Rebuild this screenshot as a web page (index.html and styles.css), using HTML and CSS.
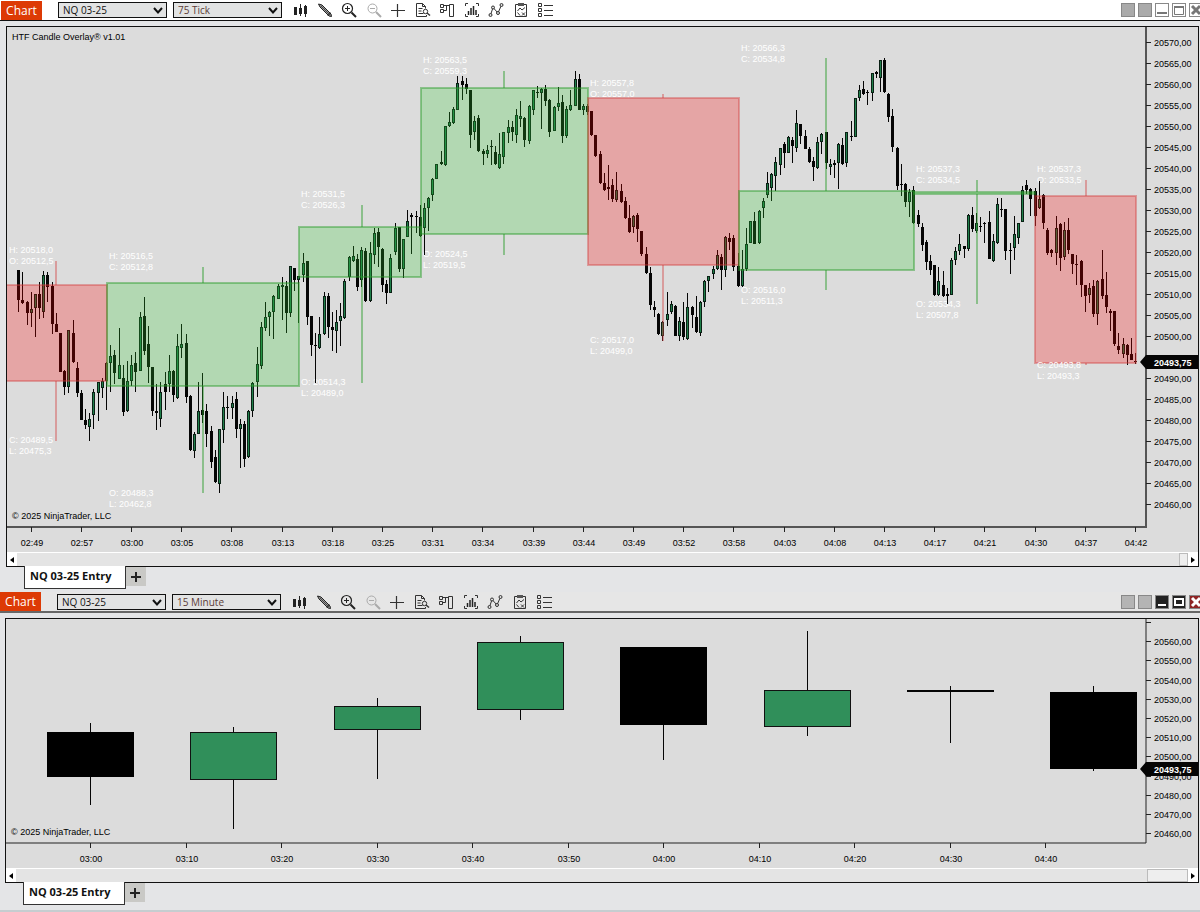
FILE: index.html
```html
<!DOCTYPE html>
<html lang="en">

<head>
    <meta charset="UTF-8">
    <title>NQ 03-25 Chart</title>
    <link rel="stylesheet" href="styles.css">
</head>

<body>
    <!-- icon set shared by both toolbars -->
    <svg class="icon-defs" aria-hidden="true">
        <symbol id="i-bars" viewBox="0 0 16 16">
            <path d="M8.500 2v12M13.500 3v12" stroke="#222" fill="none" />
            <path d="M2 5h3v8h-3zM7 6h3v6h-3zM12 4h3v8h-3z" fill="#222" />
        </symbol>
        <symbol id="i-pencil" viewBox="0 0 16 16">
            <path d="M1.500 2l3.500 1 9 9 .5 2.500-2.500-.5-9-9z" fill="#999" stroke="#222" />
            <path d="M4 4l9 9M13.500 10.500l-3 3" stroke="#333" fill="none" stroke-width=".8" />
        </symbol>
        <symbol id="i-zoomin" viewBox="0 0 16 16">
            <circle cx="6.500" cy="6.500" r="5" fill="none" stroke="#222" stroke-width="1.200" />
            <path d="M4 6.500h5M6.500 4v5" stroke="#222" fill="none" />
            <path d="M10.500 10.500l4.500 4.500" stroke="#222" stroke-width="2" />
        </symbol>
        <symbol id="i-zoomout" viewBox="0 0 16 16">
            <circle cx="6.500" cy="6.500" r="4.500" fill="none" stroke="#aaa" />
            <path d="M4 6.500h5" stroke="#aaa" fill="none" />
            <path d="M10 10l5 5" stroke="#aaa" stroke-width="2" />
        </symbol>
        <symbol id="i-cross" viewBox="0 0 16 16">
            <path d="M1 8.500h14M7.500 2v13" stroke="#333" fill="none" stroke-width="1.200" />
        </symbol>
        <symbol id="i-doc" viewBox="0 0 16 16">
            <path d="M11.500 13v1.500H1.500v-13h6l3 3v2M7.500 1.500v3h3M3.500 6.500h4M3.500 9h3M3.500 11.500h5" stroke="#333" fill="none" />
            <circle cx="10.500" cy="9.500" r="2.200" fill="none" stroke="#333" />
            <path d="M12 11l3 2.500" stroke="#333" stroke-width="1.500" />
        </symbol>
        <symbol id="i-trader" viewBox="0 0 16 16">
            <path d="M1.500 2.500h3v3h-3zM1.500 7.500h3v3h-3zM4.500 3.500h6M4.500 8.500h3v-5M10.500 2.500h4v12h-4z" stroke="#333" fill="none" />
        </symbol>
        <symbol id="i-indicator" viewBox="0 0 16 16">
            <path d="M4 1.500H1.500V4M12 1.500h2.500V4M4 14.500H1.500V12M12 14.500h2.500V12" stroke="#333" fill="none" />
            <path d="M4.500 9v4M7 6v7M9.500 4v9M12 8v5" stroke="#222" stroke-width="1.500" fill="none" />
        </symbol>
        <symbol id="i-strategy" viewBox="0 0 16 16">
            <path d="M2.500 13L5 5.500l5 5.500 3.500-8" stroke="#333" fill="none" />
            <g fill="#ddd" stroke="#333">
                <circle cx="2.500" cy="13" r="1.500" />
                <circle cx="5" cy="5.500" r="1.500" />
                <circle cx="10" cy="11" r="1.500" />
                <circle cx="13.500" cy="3" r="1.500" />
            </g>
        </symbol>
        <symbol id="i-props" viewBox="0 0 16 16">
            <path d="M2.500 2.500h11v12h-11z" stroke="#333" fill="none" />
            <path d="M5 1h6v3H5z" fill="#555" />
            <path d="M4.500 9l2.500-3 2 2 3-2.500M4.500 10.500l2.500 3M9 10.500l3 3m0-3l-3 3" stroke="#333" fill="none" />
        </symbol>
        <symbol id="i-list" viewBox="0 0 16 16">
            <path d="M1.500 1.500h3v3h-3zM1.500 6.500h3v3h-3zM1.500 11.500h3v3h-3zM7 3.500h9M7 8.500h9M7 13.500h9" stroke="#333" fill="none" />
        </symbol>
    </svg>

    <section class="chart-window active">
        <header class="toolbar">
            <h2 class="badge">Chart</h2>
            <div class="picker">
                <select aria-label="Instrument"><option>NQ 03-25</option></select>
                <svg class="chevron" viewBox="0 0 10 8"><path d="M1 1l4 4.500L9 1" /></svg>
            </div>
            <div class="picker interval">
                <select aria-label="Interval"><option>75 Tick</option></select>
                <svg class="chevron" viewBox="0 0 10 8"><path d="M1 1l4 4.500L9 1" /></svg>
            </div>
            <nav class="tools"></nav>
            <div class="window-buttons">
                <button class="link" aria-label="Instrument link"></button>
                <button class="link" aria-label="Interval link"></button>
                <button aria-label="Minimize"><svg viewBox="0 0 12 12"><path d="M1 9h10" stroke-width="2" /></svg></button>
                <button aria-label="Maximize"><svg viewBox="0 0 12 12"><path d="M2 3h8" stroke-width="2" /><path d="M1.500 2v8.500h9V2" /></svg></button>
                <button class="close" aria-label="Close"><svg viewBox="0 0 12 12"><path d="M2 2l8 8M10 2l-8 8" stroke-width="3" /></svg></button>
            </div>
        </header>
        <div class="panel">
            <svg id="tickChart" class="plot" viewBox="7 27 1191 525"></svg>
            <div class="scrollbar">
                <button aria-label="Scroll left"><svg viewBox="0 0 6 8"><path d="M5 1v6L1 4z" /></svg></button>
                <div class="track"><div class="thumb"></div></div>
                <button aria-label="Scroll right"><svg viewBox="0 0 6 8"><path d="M1 1v6l4-3z" /></svg></button>
            </div>
        </div>
        <div class="tabs">
            <button class="tab">NQ 03-25 Entry</button>
            <button class="add-tab" aria-label="New tab"><svg viewBox="0 0 10 10"><path d="M5 0v10M0 5h10" /></svg></button>
        </div>
    </section>

    <section class="chart-window second">
        <header class="toolbar">
            <h2 class="badge">Chart</h2>
            <div class="picker">
                <select aria-label="Instrument"><option>NQ 03-25</option></select>
                <svg class="chevron" viewBox="0 0 10 8"><path d="M1 1l4 4.500L9 1" /></svg>
            </div>
            <div class="picker interval">
                <select aria-label="Interval"><option>15 Minute</option></select>
                <svg class="chevron" viewBox="0 0 10 8"><path d="M1 1l4 4.500L9 1" /></svg>
            </div>
            <nav class="tools"></nav>
            <div class="window-buttons">
                <button class="link" aria-label="Instrument link"></button>
                <button class="link" aria-label="Interval link"></button>
                <button aria-label="Minimize"><svg viewBox="0 0 12 12"><path d="M2 9h8" stroke-width="2" /></svg></button>
                <button aria-label="Maximize"><svg viewBox="0 0 12 12"><path d="M2 3h8v6H2z" stroke-width="2" /></svg></button>
                <button class="close" aria-label="Close"><svg viewBox="0 0 12 12"><path d="M2 2l8 8M10 2l-8 8" stroke-width="3" /></svg></button>
            </div>
        </header>
        <div class="panel">
            <svg id="minuteChart" class="plot" viewBox="6 619 1192 249"></svg>
            <div class="scrollbar">
                <button aria-label="Scroll left"><svg viewBox="0 0 6 8"><path d="M5 1v6L1 4z" /></svg></button>
                <div class="track"><div class="thumb"></div></div>
                <button aria-label="Scroll right"><svg viewBox="0 0 6 8"><path d="M1 1v6l4-3z" /></svg></button>
            </div>
        </div>
        <div class="tabs">
            <button class="tab">NQ 03-25 Entry</button>
            <button class="add-tab" aria-label="New tab"><svg viewBox="0 0 10 10"><path d="M5 0v10M0 5h10" /></svg></button>
        </div>
    </section>

    <script src="charts.js"></script>
</body>

</html>
```
FILE: styles.css
```css
* {
    box-sizing: border-box;
}

body {
    margin: 0;
    background-color: #e4e5e7;
    font-family: "Open Sans", "Noto Sans", sans-serif;
    color: #111;
    overflow-x: hidden;
}

button {
    padding: 0;
    border: none;
    background: none;
    font: inherit;
    color: inherit;
}

.icon-defs {
    display: none;
}

.chart-window {
    display: flex;
    flex-direction: column;
}

/* toolbar */
.toolbar {
    display: flex;
    align-items: center;
    height: 21px;
    padding-left: 1px;
    border-bottom: 1px solid #111;
    background-color: #fff;
    overflow: hidden;
}

.second .toolbar {
    padding-left: 0;
    border-bottom: 2px solid #666;
    background-color: #e6e6e6;
}

.badge {
    width: 41px;
    margin: 0 16px 0 0;
    background-color: #dd3a05;
    color: #fff;
    font-size: 12px;
    font-weight: 400;
    line-height: 19px;
    text-align: center;
}

.picker {
    position: relative;
    width: 109px;
    margin-right: 6px;
}

.picker select {
    display: block;
    width: 100%;
    height: 16px;
    padding: 0 4px;
    border: 1px solid #111;
    border-radius: 0;
    appearance: none;
    background-color: #e2e3e3;
    color: #111;
    font-family: inherit;
    font-size: 10px;
    line-height: 14px;
}

.interval select {
    color: #5c3c38;
}

.chevron {
    position: absolute;
    top: 5px;
    right: 4px;
    width: 10px;
    height: 8px;
    fill: none;
    stroke: #111;
    stroke-width: 2;
    pointer-events: none;
}

.tools {
    display: flex;
    justify-content: space-between;
    width: 261px;
    margin-left: 4px;
}

.tools button,
.tools svg {
    display: block;
    width: 16px;
    height: 16px;
}

.window-buttons {
    display: flex;
    gap: 3px;
    margin-left: auto;
    margin-right: -3px;
}

.window-buttons button {
    width: 14px;
    height: 14px;
    border: 1px solid #888;
    background-color: #fff;
}

.window-buttons .link {
    background-color: #aaa;
}

.window-buttons svg {
    display: block;
    width: 12px;
    height: 12px;
    fill: none;
    stroke: #777;
}

.second .window-buttons button {
    background-color: #222;
}

.second .window-buttons .link {
    background-color: #b4b4b4;
}

.second .window-buttons .close {
    background-color: #8e2424;
}

.second .window-buttons svg {
    stroke: #fff;
}

/* chart */
.panel {
    margin: 5px 1px 0 6px;
    border: 1px solid #111;
    background-color: #dcdcdc;
}

.second .panel {
    margin-left: 5px;
}

.plot {
    display: block;
    width: 100%;
    height: auto;
    font-family: "Liberation Sans", Arial, sans-serif;
    font-size: 9px;
}

.plot text {
    fill: #000;
}

.plot .htf-label,
.plot .price-text {
    fill: #fff;
}

.plot .price-text {
    font-weight: 700;
}

.wick,
.body-down,
.price-tag {
    fill: #050505;
}

.body-up {
    fill: #0a2014;
}

.body-core {
    fill: #1f7f4a;
}

.htf-up {
    fill: rgba(50, 205, 50, .25);
}

.htf-down {
    fill: rgba(255, 0, 0, .25);
}

.htf-up-line {
    fill: none;
    stroke: rgba(40, 155, 40, .45);
    stroke-width: 2;
}

.htf-down-line {
    fill: none;
    stroke: rgba(210, 60, 60, .4);
    stroke-width: 2;
}

.axis {
    fill: none;
    stroke: #555;
    stroke-width: 2;
}

.second .axis,
.tick {
    fill: none;
    stroke: #222;
    stroke-width: 1;
}

.big-up {
    fill: #308f5a;
    stroke: #111;
}

.big-down {
    fill: #000;
    stroke: #000;
}

/* scrollbar */
.scrollbar {
    display: flex;
    height: 14px;
    border-top: 1px solid #fff;
    background-color: #e4e4e4;
}

.scrollbar button {
    width: 10px;
    background-color: #fff;
}

.scrollbar button svg {
    display: block;
    width: 6px;
    height: 8px;
    margin: auto;
}

.track {
    display: flex;
    flex: 1;
    justify-content: flex-end;
}

.thumb {
    width: 9px;
    border: 1px solid #bbb;
    background-color: #eee;
}

.second .thumb {
    width: 41px;
}

/* tabs */
.tabs {
    display: flex;
    align-items: flex-start;
    height: 26px;
    margin-top: -1px;
    padding-left: 24px;
}

.second .tabs {
    height: 30px;
    padding-left: 23px;
    border-bottom: 2px solid #c6cdd0;
}

.tab {
    width: 102px;
    height: 23px;
    padding: 0 0 4px 5px;
    border: 1px solid #333;
    border-top: none;
    background-color: #fff;
    font-size: 11px;
    font-weight: 700;
    text-align: left;
    white-space: nowrap;
}

.add-tab {
    width: 20px;
    height: 19px;
    margin-top: 1px;
    background-color: #c9c9c6;
}

.add-tab svg {
    display: block;
    width: 10px;
    height: 10px;
    margin: auto;
    stroke: #222;
    stroke-width: 2;
}
```
FILE: charts.js
```js
const SVG_NS = 'http://www.w3.org/2000/svg';

// toolbar buttons
const tools = [
    ['bars', 'Bars style'], ['pencil', 'Drawing tools'], ['zoomin', 'Zoom in'], ['zoomout', 'Zoom out'],
    ['cross', 'Crosshair'], ['doc', 'Data box'], ['trader', 'Chart trader'], ['indicator', 'Indicators'],
    ['strategy', 'Strategies'], ['props', 'Properties'], ['list', 'Data series']
];
document.querySelectorAll('.tools').forEach(nav => {
    nav.innerHTML = tools.map(([id, name]) =>
        `<button aria-label="${name}"><svg><use href="#i-${id}"></use></svg></button>`).join('');
});

// high, body top, body bottom, low (plot units), u = up, d = down
const tickCandles = `
270,270,300,312,d 272,300,303,304,d 301,302,313,325,d 292,309,313,327,u 294,294,308,337,u 282,294,308,319,d
271,275,312,318,u 272,275,287,302,d 282,286,324,334,d 313,324,332,332,d 333,333,372,372,d 370,371,387,395,d
330,330,387,393,u 320,333,362,363,d 362,368,393,397,d 390,393,420,420,d 409,420,425,429,d 413,419,427,441,u
389,392,415,429,u 382,382,393,421,u 378,381,388,398,u 362,363,381,410,u 345,356,363,392,u 350,355,373,384,d
328,365,379,379,u 365,378,412,416,d 361,381,411,412,u 355,365,381,386,u 352,363,372,392,d 312,317,371,371,u
297,316,351,355,d 326,344,367,383,d 367,367,411,416,d 384,411,413,430,d 382,392,419,427,u 372,384,392,410,d
355,371,384,392,u 370,371,395,402,d 334,346,398,399,u 324,344,348,358,u 334,343,397,403,d 395,396,450,451,d
432,434,451,458,u 382,411,434,434,u 373,410,415,423,d 404,411,434,447,d 426,431,462,468,d 450,457,482,483,d
429,429,484,493,u 392,407,430,443,u 396,407,408,419,d 396,403,408,419,u 392,399,429,438,d 419,424,429,468,u
421,424,459,467,d 410,411,457,458,u 382,383,411,417,u 347,364,382,397,u 322,327,366,369,u 302,317,328,331,u
311,312,317,336,u 295,296,312,339,u 284,286,299,299,u 277,285,287,320,u 281,286,313,333,d 266,266,313,317,u
268,268,280,291,d 276,276,280,323,u 253,263,275,282,u 261,261,317,325,d 316,316,345,356,d 333,345,346,383,d
317,334,348,349,u 292,296,334,335,u 293,296,327,338,d 312,327,330,351,d 310,322,331,353,u 303,316,321,346,u
279,281,318,319,u 256,257,277,281,u 246,256,261,262,u 254,259,287,291,d 247,250,280,287,u 248,251,301,302,d
242,253,301,302,u 228,233,255,264,u 228,232,247,267,d 248,249,285,292,d 280,284,293,304,d 254,258,293,293,u
223,228,252,255,u 227,227,269,272,d 239,239,269,278,u 210,221,237,237,u 213,215,217,254,d 211,216,217,233,d
205,217,236,237,d 203,208,228,255,u 197,198,208,231,u 178,179,195,201,u 164,164,179,179,u 151,162,164,165,d
126,126,165,166,u 112,122,126,127,u 107,109,123,124,u 76,83,110,110,u 76,81,85,100,d 78,84,89,94,d
90,90,135,148,d 116,121,132,140,u 115,118,151,152,d 149,151,154,165,d 145,150,154,158,u 140,146,147,165,d
146,152,164,165,d 133,154,168,169,u 132,132,157,164,u 120,127,133,143,u 121,127,132,141,d 109,115,135,143,u
101,116,119,127,u 117,118,140,147,d 105,106,141,144,u 90,90,110,115,u 86,92,93,98,d 88,89,93,129,u
85,89,101,106,d 99,100,132,137,d 106,107,131,131,u 87,103,107,111,u 95,102,136,143,d 106,109,136,138,u
90,105,110,111,u 71,79,106,106,u 74,79,110,110,d 104,106,110,115,u 104,106,112,115,d 111,111,135,136,d
135,135,156,157,d 151,154,183,184,d 173,183,190,191,d 165,187,189,200,d 179,185,199,202,d 172,190,200,202,u
184,191,202,203,d 197,201,218,219,d 205,218,232,233,d 215,216,227,233,u 213,215,229,242,d 231,231,254,256,d
247,254,273,274,d 267,273,305,310,d 301,307,310,317,d 313,314,334,335,d 321,322,336,341,u 292,314,320,326,u
301,304,312,314,u 305,306,336,336,d 317,321,336,341,u 302,322,337,340,d 293,307,339,340,u 306,307,315,328,d
296,317,332,333,d 301,302,333,336,u 280,281,302,307,u 276,276,281,292,u 266,269,274,279,u 250,255,269,270,u
254,257,270,290,d 236,237,270,277,u 233,238,242,250,d 235,238,267,271,d 253,266,286,287,d 250,269,286,287,u
228,244,269,271,u 221,221,243,243,u 212,221,244,244,d 210,211,243,244,u 198,201,208,218,u 172,183,195,198,u
173,174,188,201,u 157,162,176,191,u 148,148,165,175,u 142,144,153,168,d 136,137,153,153,u 137,140,146,163,d
110,123,148,152,u 124,124,136,144,d 130,136,149,149,d 147,149,162,163,d 157,161,167,181,d 137,142,168,169,u
133,134,142,154,u 132,132,163,169,d 159,164,167,175,u 160,163,165,178,d 143,144,163,189,u 138,145,164,165,d
132,132,163,167,u 121,136,137,141,d 98,98,137,137,u 85,90,98,101,u 81,89,94,95,d 90,92,93,105,d
73,73,93,101,u 71,72,74,78,d 60,60,78,92,u 58,60,92,93,d 93,94,117,122,d 109,116,147,152,d
147,148,186,190,d 164,184,185,196,d 183,184,202,207,d 189,192,202,217,u 186,190,223,224,d 210,215,224,227,d
223,227,245,251,d 240,242,262,270,d 255,261,270,275,d 265,265,295,296,d 267,281,295,296,u 271,285,296,297,d
288,294,296,304,d 258,260,295,295,u 247,251,260,265,u 234,244,251,255,u 246,246,249,258,d 214,215,249,251,u
207,215,229,232,d 213,223,231,233,u 217,226,227,232,d 222,223,224,243,d 211,222,259,259,d 234,241,261,262,u
198,204,243,244,u 198,209,210,217,d 209,209,251,260,d 243,250,251,274,d 216,234,248,260,u 223,223,238,244,u
186,190,222,222,u 180,185,190,194,d 188,189,199,216,d 188,191,216,226,d 181,199,208,209,u 194,195,223,229,d
228,230,253,255,d 249,250,253,257,d 216,228,253,265,u 223,224,258,271,d 222,230,257,260,u 218,230,250,254,d
254,254,264,274,d 255,264,265,285,d 260,261,285,297,d 285,285,296,312,d 283,288,295,303,u 280,286,314,317,d
280,281,314,325,u 250,279,296,299,d 272,295,307,313,d 309,311,313,331,d 311,311,344,346,d 333,346,350,354,d
338,344,354,358,u 344,345,355,365,d 338,354,360,360,d 353,361,362,364,d`
    .trim().split(/\s+/).map(row => row.split(','));

// higher time frame candles: left, right, top, bottom, wick x, high, low, direction, upper labels, lower labels
const htfCandles = [
    [6, 107, 285, 381, 56, 261, 441, 'down', ['H: 20518,0', 'O: 20512,5'], 253, ['C: 20489,5', 'L: 20475,3'], 443],
    [107, 299, 283, 386, 203, 267, 493, 'up', ['H: 20516,5', 'C: 20512,8'], 259, ['O: 20488,3', 'L: 20462,8'], 496],
    [299, 421, 227, 277, 362, 205, 383, 'up', ['H: 20531,5', 'C: 20526,3'], 197, ['O: 20514,3', 'L: 20489,0'], 385],
    [421, 588, 88, 234, 504, 71, 255, 'up', ['H: 20563,5', 'C: 20559,3'], 63, ['O: 20524,5', 'L: 20519,5'], 257],
    [588, 739, 98, 265, 663, 94, 341, 'down', ['H: 20557,8', 'O: 20557,0'], 86, ['C: 20517,0', 'L: 20499,0'], 343],
    [739, 914, 191, 270, 826, 58, 290, 'up', ['H: 20566,3', 'C: 20534,8'], 51, ['O: 20516,0', 'L: 20511,3'], 293],
    [914, 1035, 192, 194, 977, 180, 304, 'up', ['H: 20537,3', 'C: 20534,5'], 172, ['O: 20534,3', 'L: 20507,8'], 307],
    [1035, 1136, 196, 363, 1086, 180, 365, 'down', ['H: 20537,3', 'O: 20533,5'], 172, ['C: 20493,8', 'L: 20493,3'], 368]
];

const tickTimes = ['02:49', '02:57', '03:00', '03:05', '03:08', '03:13', '03:18', '03:25', '03:31', '03:34', '03:39', '03:44',
    '03:49', '03:52', '03:58', '04:03', '04:08', '04:13', '04:17', '04:21', '04:30', '04:37', '04:42'];
const minuteTimes = ['03:00', '03:10', '03:20', '03:30', '03:40', '03:50', '04:00', '04:10', '04:20', '04:30', '04:40'];

const minuteCandles = [
    [723, 733, 777, 805, 'down'], [727, 733, 780, 829, 'up'], [698, 707, 730, 779, 'up'], [636, 643, 710, 720, 'up'],
    [647, 648, 725, 760, 'down'], [631, 691, 727, 736, 'up'], [686, 691, 691, 743, 'down'], [686, 693, 769, 771, 'down']
];

function add(svg, tag, attrs, text) {
    const node = document.createElementNS(SVG_NS, tag);
    for (const key in attrs) node.setAttribute(key, attrs[key]);
    if (text) node.textContent = text;
    svg.appendChild(node);
}

function rect(svg, x, y, width, height, cls) {
    add(svg, 'rect', { x, y, width, height, class: cls });
}

function drawAxes(svg, opt) {
    add(svg, 'path', { d: `M${opt.left} ${opt.bottom}H1146V${opt.top}`, class: 'axis' });
    opt.times.forEach((time, i) => {
        const x = Math.round(opt.firstX + i * opt.stepX);
        add(svg, 'path', { d: `M${x + 0.5} ${opt.bottom}v5`, class: 'tick' });
        add(svg, 'text', { x: x + 1, y: opt.bottom + 19, 'text-anchor': 'middle' }, time);
    });
    for (let price = opt.maxPrice, i = 0; price >= 20460; price -= opt.priceStep, i++) {
        const y = Math.round(opt.firstY + i * opt.stepY);
        add(svg, 'path', { d: `M1146 ${y + 0.5}h5`, class: 'tick' });
        if (price <= opt.maxLabel) add(svg, 'text', { x: 1154, y: y + 4 }, price + ',00');
    }
    add(svg, 'text', { x: opt.left + 6, y: opt.bottom - 8 }, '© 2025 NinjaTrader, LLC');
}

function drawPriceTag(svg, y) {
    add(svg, 'path', { d: `M1140 ${y}l6-7h52v14h-52z`, class: 'price-tag' });
    add(svg, 'text', { x: 1154, y: y + 4, class: 'price-text' }, '20493,75');
}

function drawLabels(svg, left, firstY, labels) {
    labels.forEach((label, i) => {
        add(svg, 'text', { x: Math.max(left + 2, 9), y: firstY + i * 11, class: 'htf-label' }, label);
    });
}

function drawTickChart() {
    const svg = document.getElementById('tickChart');
    htfCandles.forEach((c, i) => {
        drawLabels(svg, c[0], c[9], c[8]);
        if (i < htfCandles.length - 1) drawLabels(svg, c[0], c[11], c[10]);
    });
    tickCandles.forEach(([high, top, bottom, low, dir], i) => {
        const x = Math.round(18.2 + i * 4.183);
        rect(svg, x, high, 1, low - high, 'wick');
        rect(svg, x - 1, top, 3, Math.max(bottom - top, 1), dir === 'u' ? 'body-up' : 'body-down');
        if (dir === 'u' && bottom - top > 2) rect(svg, x, +top + 1, 1, bottom - top - 2, 'body-core');
    });
    htfCandles.forEach(([left, right, top, bottom, x, high, low, dir]) => {
        rect(svg, left, top, right - left, bottom - top, 'htf-' + dir);
        rect(svg, left, top, right - left, bottom - top, `htf-${dir}-line`);
        add(svg, 'path', { d: `M${x} ${high}V${top}M${x} ${bottom}V${low}`, class: `htf-${dir}-line` });
    });
    // the open candle keeps its lower labels in front of its body
    const last = htfCandles[htfCandles.length - 1];
    drawLabels(svg, last[0], last[11], last[10]);
    drawAxes(svg, {
        left: 6, top: 27, bottom: 527, times: tickTimes, firstX: 30.5, stepX: 50.2,
        maxPrice: 20570, maxLabel: 20570, priceStep: 5, firstY: 42, stepY: 21
    });
    add(svg, 'text', { x: 12, y: 40 }, 'HTF Candle Overlay® v1.01');
    drawPriceTag(svg, 362);
}

function drawMinuteChart() {
    const svg = document.getElementById('minuteChart');
    minuteCandles.forEach(([high, top, bottom, low, dir], i) => {
        const x = Math.round(90 + i * 143.35);
        rect(svg, x, high, 1, low - high, 'wick');
        if (top === bottom) rect(svg, x - 43, top - 1, 87, 2, 'wick');
        else rect(svg, x - 42.5, top - 0.5, 86, bottom - top, 'big-' + dir);
    });
    drawAxes(svg, {
        left: 5, top: 619, bottom: 843, times: minuteTimes, firstX: 90, stepX: 95.5,
        maxPrice: 20570, maxLabel: 20560, priceStep: 10, firstY: 622, stepY: 19.2
    });
    drawPriceTag(svg, 769);
}

drawTickChart();
drawMinuteChart();
```
